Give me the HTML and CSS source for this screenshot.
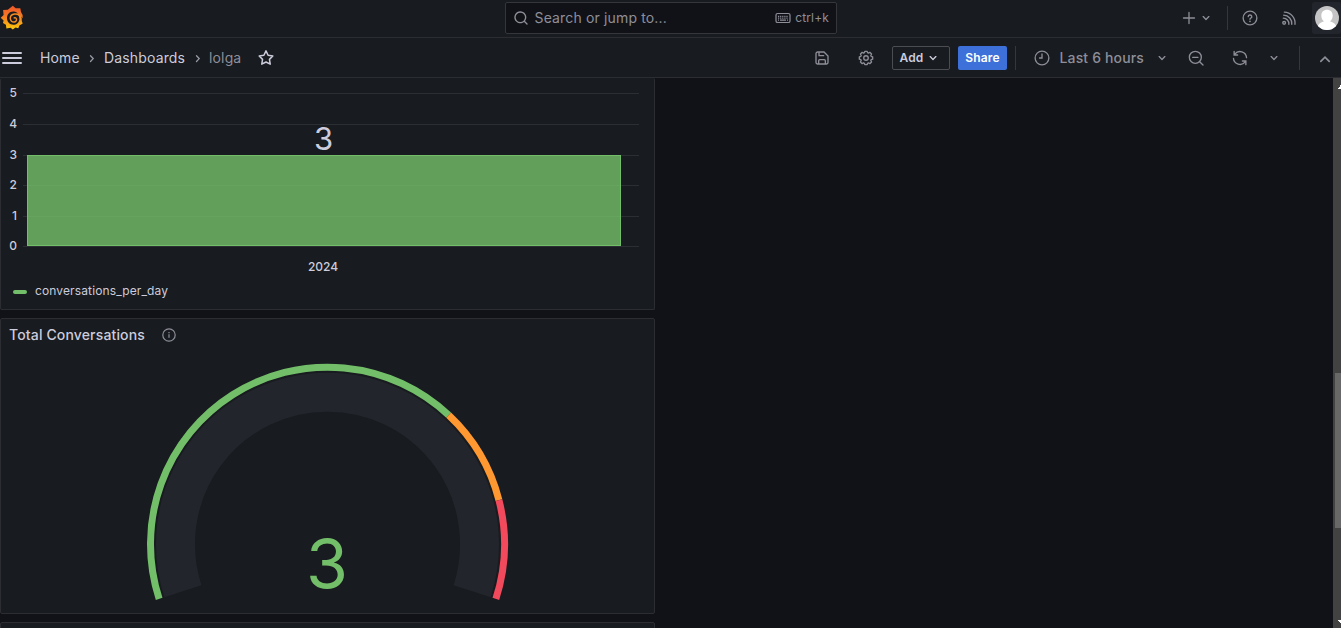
FILE: index.html
```html
<!DOCTYPE html>
<html lang="en">
<head>
<meta charset="utf-8">
<title>lolga - Dashboards - Grafana</title>
<link rel="stylesheet" href="styles.css">
</head>
<body>
<svg class="defs" aria-hidden="true">
  <defs>
    <symbol id="chev-down" viewBox="0 0 24 24"><path fill="currentColor" d="M17,9.17a1,1,0,0,0-1.41,0L12,12.71,8.46,9.17a1,1,0,0,0-1.41,0,1,1,0,0,0,0,1.42l4.24,4.24a1,1,0,0,0,1.42,0L17,10.59A1,1,0,0,0,17,9.17Z"/></symbol>
  </defs>
</svg>
<div class="app">
  <header class="topbar">
    <svg class="logo" viewBox="0 0 24 26">
      <defs><linearGradient id="flame" x1="0" y1="0" x2="0" y2="1"><stop offset="0.05" stop-color="#f05a28"/><stop offset="0.45" stop-color="#f47b25"/><stop offset="1" stop-color="#fbca0a"/></linearGradient></defs>
      <path fill="url(#flame)" fill-rule="evenodd" d="M12.8 0.8 L15.6 3.3 L20.3 3.2 L21 7 Q23.2 9.5 22.7 13.4 L21.5 11.6 Q21.7 15.2 21.9 16.2 L22.7 18.6 L19.4 20.4 L18.3 23.2 L15.5 22.6 L12.8 24.6 L10.6 22.7 L6.4 23.6 L5.9 19.8 L3 18 L3.6 15.6 L0.7 12.8 L3.6 9.9 L3.1 4.9 L7.8 4.8 Z M14 6.5 C10 6 7 9 7 13 C7 17 9.800 19.700 13.4 19.700 C16.7 19.700 19 17.400 19.400 14.4 C19.3 9.6 17.3 6.8 14 6.500 Z"/>
      <path class="swirl" d="M20.800 13.800 C20.200 10.200 17.400 8.700 14.600 9 C11.800 9.300 10.200 11.300 10.300 13.500 C10.400 15.700 12.100 17.200 14.100 17 C15.800 16.800 16.800 15.400 16.500 14.100 C16.200 13 15.100 12.500 14.200 12.900"/>
    </svg>
    <div class="search">
      <svg class="i16" viewBox="0 0 24 24"><path fill="currentColor" d="M21.71,20.29,18,16.61A9,9,0,1,0,16.61,18l3.68,3.68a1,1,0,0,0,1.42,0A1,1,0,0,0,21.71,20.29ZM11,18a7,7,0,1,1,7-7A7,7,0,0,1,11,18Z"/></svg>
      <span class="search-text">Search or jump to...</span>
      <svg class="i16" viewBox="0 0 16 16"><g fill="none" stroke="currentColor" stroke-width="1.2"><rect x="1" y="3.5" width="14" height="9" rx="1.6"/><path stroke-dasharray="1.2 .9" d="M3 6.3h10M3 8.100h10"/><path d="M5 10.200h6M3 10.200h1M12 10.200h1"/></g></svg>
      <span class="kbd">ctrl+k</span>
    </div>
    <div class="top-actions">
      <svg class="i16" viewBox="0 0 16 16"><path class="line" d="M8 2.500v11M2.500 8h11"/></svg>
      <svg class="i16 new-chev"><use href="#chev-down"/></svg>
      <span class="divider top-divider"></span>
      <svg class="i16 help" viewBox="0 0 24 24"><circle class="line2" cx="12" cy="12" r="10.3"/><path class="line2" d="M9.3 10a2.7 2.5 0 1 1 3.8 2.3c-.8.4-1.1.7-1.1 1.6"/><circle fill="currentColor" cx="12" cy="17" r="1.3"/></svg>
      <svg class="i16 rss" viewBox="0 0 24 24"><g class="line2"><circle cx="4.7" cy="19.3" r="2.1"/><path d="M3.5 12.2a8.3 8.3 0 0 1 8.3 9.2M4 7.8a12.4 12.4 0 0 1 12.2 13.6M5 3.2a16.5 16.5 0 0 1 16 18.2"/></g></svg>
      <span class="avatar-box">
        <svg class="avatar" viewBox="0 0 24 24"><defs><clipPath id="round"><circle cx="12" cy="12" r="12"/></clipPath></defs><g clip-path="url(#round)"><rect width="24" height="24" fill="#c4c4c4"/><path fill="#fff" d="M12 3.8c3.4 0 5.7 2.3 5.7 5.7 0 2.6-1 4.6-2.7 5.7 3.6.9 6 3.2 6.6 6V24H2.4v-2.8c.6-2.8 3-5.1 6.6-6-1.700-1.100-2.700-3.100-2.700-5.700 0-3.400 2.300-5.700 5.700-5.700Z"/></g></svg>
      </span>
    </div>
  </header>

  <nav class="toolbar">
    <span class="burger"><i></i><i></i><i></i></span>
    <div class="crumbs">
      <span class="home">Home</span>
      <svg class="sep" viewBox="0 0 16 16"><path class="line" d="M6.500 5.700l2.700 2.900-2.700 2.900"/></svg>
      <span class="dash">Dashboards</span>
      <svg class="sep" viewBox="0 0 16 16"><path class="line" d="M6.500 5.700l2.700 2.900-2.700 2.900"/></svg>
      <span class="current">lolga</span>
      <svg class="star" viewBox="0 0 24 24"><path fill="none" stroke="currentColor" stroke-width="2" stroke-linejoin="round" d="M12 2.500l2.800 5.900 6.300.95-4.500 4.500 1.050 6.400L12 17.300l-5.650 2.950 1.050-6.400-4.500-4.500 6.300-.95Z"/></svg>
    </div>
    <div class="tools">
      <svg class="i16 save" viewBox="0 0 24 24"><g class="line2"><path d="M3 5.500a2.500 2.500 0 0 1 2.500-2.500H15l6 6v9.500a2.500 2.500 0 0 1-2.500 2.500h-13A2.500 2.500 0 0 1 3 18.500ZM7.500 3v5.500h7M7 21v-5a1.500 1.500 0 0 1 1.500-1.500h7A1.500 1.500 0 0 1 17 16v5"/></g></svg>
      <svg class="i16 cog" viewBox="0 0 24 24"><g class="line2"><circle cx="12" cy="12" r="3.400"/><path d="M9.600 4.100 10.200 2h3.600l.6 2.100 1.200.5 2.100-1.100 2.600 2.600-1.100 2.100.5 1.200 2.300.8v3.600l-2.300.8-.5 1.200 1.100 2.100-2.600 2.600-2.100-1.100-1.200.5-.6 2.100h-3.600l-.6-2.100-1.200-.5-2.100 1.100-2.600-2.600 1.100-2.100-.5-1.200L2 13.800v-3.600l2.300-.8.5-1.200-1.100-2.100 2.600-2.600 2.100 1.100Z" stroke-linejoin="round"/></g></svg>
      <span class="btn add">Add<svg class="i16"><use href="#chev-down"/></svg></span>
      <span class="btn share">Share</span>
      <span class="divider"></span>
      <span class="picker">
        <svg class="i16" viewBox="0 0 24 24"><g class="line2"><circle cx="12" cy="12" r="10.300"/><path d="M12 6v6H8.300"/></g></svg>
        <span class="range">Last 6 hours</span>
        <svg class="i16"><use href="#chev-down"/></svg>
      </span>
      <svg class="i16 zoom-out" viewBox="0 0 24 24"><g class="line2"><circle cx="11" cy="11" r="9"/><path d="M7 11h8M17.500 17.500l5 5"/></g></svg>
      <svg class="i16 sync" viewBox="0 0 24 24"><g class="line2"><path d="M21.800 11.500A9.800 9.800 0 0 0 4.200 6.200M3.200 2v5.500h5.200M2.200 12.500a9.800 9.800 0 0 0 17.600 5.300M20.800 22v-5.500h-5.200"/></g></svg>
      <svg class="i16 sync-chev"><use href="#chev-down"/></svg>
      <span class="divider end-divider"></span>
      <svg class="i16 collapse" viewBox="0 0 16 16"><path class="line heavy" d="M3.800 11.300 8 7.100l4.200 4.200"/></svg>
    </div>
  </nav>

  <main class="canvas">
    <div class="panels">
      <section class="panel bars">
        <svg class="chart" viewBox="0 0 653 200">
          <path class="gridlines" d="M22 15.500h616M22 46.500h616M22 77.500h616M22 107.500h616M22 138.500h616M22 168.500h616"/>
          <rect class="bar" x="26.500" y="77.500" width="593" height="90"/>
          <path class="inbar" d="M27 107.500h592M27 138.500h592"/>
          <g class="tick" text-anchor="end"><text x="16" y="19">5</text><text x="16" y="50">4</text><text x="16" y="81">3</text><text x="16" y="111">2</text><text x="16" y="142">1</text><text x="16" y="172">0</text></g>
          <text class="tick" text-anchor="middle" x="322" y="193">2024</text>
          <text class="value" text-anchor="middle" x="322.500" y="72">3</text>
        </svg>
        <div class="legend"><span class="swatch"></span>conversations_per_day</div>
      </section>

      <section class="panel gauge">
        <h2 class="title">Total Conversations
          <svg class="info" viewBox="0 0 14 14"><g fill="none" stroke="currentColor" stroke-width="1.200"><circle cx="7" cy="7" r="6.200"/><path d="M7 6.300v3.500M7 4v1.200"/></g></svg>
        </h2>
        <svg class="dial" viewBox="0 0 653 263">
          <g fill="none" transform="translate(326.500 194.200)">
            <path class="track" d="M-144.560 46.970A152 152 0 1 1 144.560 46.970"/>
            <path class="arc ok" d="M-168.340 54.700A177 177 0 0 1 121.170 -129.030"/>
            <path class="arc warn" d="M121.170 -129.030A177 177 0 0 1 171.440 -44.020"/>
            <path class="arc crit" d="M171.440 -44.020A177 177 0 0 1 168.340 54.700"/>
          </g>
          <text class="reading" text-anchor="middle" x="326" y="238">3</text>
        </svg>
      </section>

      <section class="panel next"></section>
    </div>
    <div class="scrollbar">
      <svg class="arrow" viewBox="0 0 3 4"><path fill="#fff" d="M3 0v4H0v-1h1V2h1V0Z"/></svg>
      <span class="thumb"></span>
      <svg class="arrow" viewBox="0 0 3 4"><path fill="#fff" d="M0 0h3v3H2V2H1V1H0Z"/></svg>
    </div>
  </main>
</div>
</body>
</html>
```
FILE: styles.css
```css
* { box-sizing: border-box; }
body {
  margin: 0;
  background: #111217;
  color: #ccccdc;
  font-family: Inter, "Liberation Sans", sans-serif;
  font-size: 14px;
  letter-spacing: 0.15px;
}
svg { display: block; flex: none; }
.defs { width: 0; height: 0; position: absolute; }
.app { width: 1341px; height: 628px; overflow: hidden; display: flex; flex-direction: column; }
.i16 { width: 16px; height: 16px; }
.line { fill: none; stroke: currentColor; stroke-width: 1.3; stroke-linecap: round; }
.heavy { stroke-width: 1.7; }
.line2 { fill: none; stroke: currentColor; stroke-width: 2; stroke-linecap: round; }
.divider { width: 1px; height: 24px; background: #35373c; flex: none; }

.topbar {
  height: 38px; flex: none;
  display: grid; grid-template-columns: 505px 332px 1fr; align-items: start;
  background: #181b1f; border-bottom: 1px solid #2b2d32;
}
.logo { width: 24px; height: 26px; margin: 5px 0 0 0; }
.swirl { fill: none; stroke: #f78c21; stroke-width: 1.4; stroke-linecap: round; }
.search {
  height: 32px; margin-top: 2px; padding: 0 7px 1px;
  display: flex; align-items: center;
  background: #111217; border: 1px solid #35363c; border-radius: 2px;
  color: #8e8e99;
}
.search-text { flex: 1; margin-left: 5.5px; letter-spacing: 0.15px; }
.kbd { font-size: 12px; margin-left: 4px; letter-spacing: 0.15px; }
.top-actions { height: 36px; display: flex; align-items: center; justify-content: flex-end; color: #8e8e99; }
.new-chev { margin-left: 1px; }
.top-divider { margin: 0 14px 0 13px; }
.rss { margin-left: 23px; }
.avatar-box {
  width: 29px; height: 32px; margin-left: 15px; padding-left: 3px;
  display: flex; align-items: center;
  background: #22252b; border-radius: 2px;
}
.avatar { width: 24px; height: 24px; }

.toolbar {
  height: 40px; flex: none; display: flex; align-items: center;
  background: #181b1f; border-bottom: 1px solid #2b2d32;
}
.burger { width: 20px; margin-left: 2px; display: grid; gap: 3px; }
.burger i { height: 2px; background: #ccccdc; border-radius: 1px; }
.crumbs { flex: 1; margin-left: 18px; display: flex; align-items: center; }
.crumbs span { flex: none; white-space: nowrap; }
.home { width: 40px; }
.dash { width: 82px; }
.sep { width: 16px; height: 16px; margin: 0 4px; color: #9a9aa6; }
.current { width: 33px; margin-left: -1px; color: #8e8e99; }
.star { width: 18px; height: 18px; margin-left: 15px; }
.tools { display: flex; align-items: center; padding-right: 8px; color: #8e8e99; }
.cog { margin: 0 18px 0 28px; }
.btn {
  height: 24px; display: flex; align-items: center; justify-content: center;
  font-size: 12px; font-weight: 600; border-radius: 2px; letter-spacing: 0.15px;
}
.add { width: 58px; border: 1px solid #4b4d53; color: #ccccdc; padding-right: 1px; }
.add svg { margin-left: 2px; }
.share { width: 49px; margin: 0 8px; background: #3d71d9; color: #fff; }
.picker { width: 136px; margin-left: 18px; display: flex; align-items: center; }
.range { flex: 1; margin-left: 9.5px; font-weight: 500; white-space: nowrap; }
.zoom-out { margin-left: 18px; }
.sync { margin-left: 28px; }
.sync-chev { margin-left: 18px; }
.end-divider { margin: 0 17px; }

.canvas { flex: 1; min-height: 0; display: flex; justify-content: space-between; }
.panels { width: 655px; display: flex; flex-direction: column; gap: 8px; }
.panel { flex: none; background: #181b1f; border: 1px solid #2b2d32; border-radius: 2px; }
.bars { height: 232px; border-top: 0; }
.chart { width: 653px; height: 200px; }
.gridlines { fill: none; stroke: #2b2e32; }
.inbar { fill: none; stroke: #65a45f; }
.bar { fill: #629f5b; stroke: #73bf69; }
.tick { fill: #ccccdc; font-size: 12px; font-weight: 500; letter-spacing: 0; }
.value { fill: #ccccdc; font-size: 31px; letter-spacing: 0; }
.legend { display: flex; align-items: center; height: 25px; padding-left: 12px; font-size: 12px; letter-spacing: 0.13px; }
.swatch { width: 14px; height: 4px; margin: 3px 8px 0 0; border-radius: 2px; background: #73bf69; }
.gauge { height: 296px; }
.title {
  height: 31px; margin: 0; padding-left: 8px;
  display: flex; align-items: center;
  font-size: 14px; font-weight: 500; letter-spacing: 0.15px;
}
.info { width: 14px; height: 14px; margin-left: 17px; color: #8e8e99; }
.dial { width: 653px; height: 263px; }
.track { stroke: #22252b; stroke-width: 39; }
.arc { stroke-width: 7; }
.ok { stroke: #73bf69; }
.warn { stroke: #ff9830; }
.crit { stroke: #f2495c; }
.reading { fill: #73bf69; font-size: 68px; letter-spacing: 0; }
.next { height: 40px; }
.scrollbar {
  width: 8px; padding: 7px 0 4px; background: #424242;
  display: flex; flex-direction: column; align-items: flex-end;
}
.arrow { width: 3px; height: 4px; }
.thumb { width: 6px; height: 155px; margin: 284px 0 92px; background: #686868; flex: none; }
```
